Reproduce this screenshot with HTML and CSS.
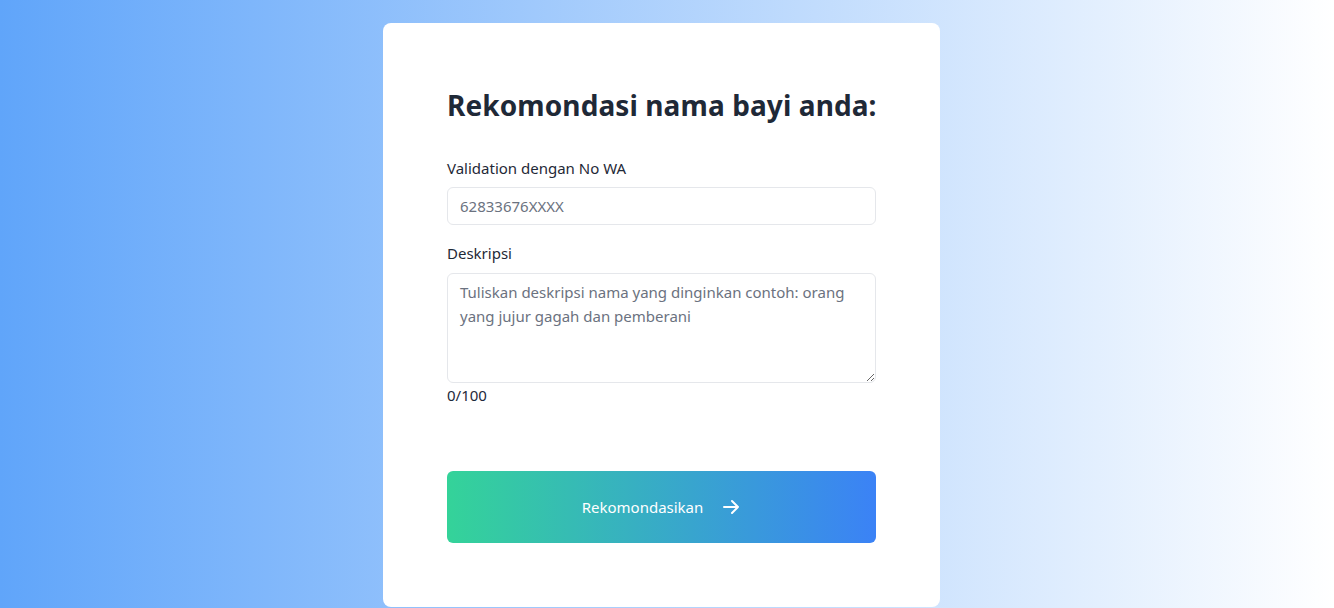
FILE: index.html
```html
<!DOCTYPE html>
<html lang="id">
<head>
<meta charset="utf-8">
<title>Rekomondasi nama bayi</title>
<link rel="stylesheet" href="styles.css">
</head>
<body>
<main class="page">
  <section class="card">
    <h1 class="title">Rekomondasi nama bayi anda:</h1>
    <form class="form">
      <label class="label" for="wa">Validation dengan No WA</label>
      <input class="input" id="wa" type="text" placeholder="62833676XXXX">
      <label class="label label-gap" for="desc">Deskripsi</label>
      <textarea class="textarea" id="desc" placeholder="Tuliskan deskripsi nama yang dinginkan contoh: orang yang jujur gagah dan pemberani"></textarea>
      <div class="count">0/100</div>
      <button class="btn" type="button">
        <span>Rekomondasikan</span>
        <svg class="arrow" width="20" height="20" viewBox="0 0 20 20" fill="none" stroke="currentColor" stroke-width="2" stroke-linecap="round" stroke-linejoin="round"><path d="M3 10h14M11 4l6 6-6 6"/></svg>
      </button>
    </form>
  </section>
</main>
</body>
</html>
```
FILE: styles.css
```css
* { box-sizing: border-box; }
html, body { margin: 0; padding: 0; height: 100%; }
body {
  font-family: "Noto Sans", "Open Sans", sans-serif;
  background: linear-gradient(to right, #60a5fa, #ffffff);
  overflow: hidden;
}
.page {
  height: 608px;
  display: flex;
  justify-content: center;
  padding-top: 23px;
}
.card {
  width: 557px;
  height: 584px;
  margin-left: -11px;
  background: #fff;
  border-radius: 8px;
  padding: 64px;
}
.title {
  margin: 0 0 33px;
  font-size: 28px;
  letter-spacing: 0.1px;
  white-space: nowrap;
  line-height: 36px;
  font-weight: 700;
  color: #1f2937;
}
.form { display: flex; flex-direction: column; }
.label {
  font-size: 15px;
  line-height: 24px;
  color: #1f2937;
  margin-bottom: 7px;
}
.label-gap { margin-top: 16px; margin-bottom: 8px; }
.input, .textarea {
  font-family: inherit;
  font-size: 15px;
  color: #374151;
  border: 1px solid #e5e7eb;
  border-radius: 6px;
  padding: 6px 12px;
  background: #fff;
  width: 100%;
}
.input { height: 38px; }
.textarea { height: 110px; line-height: 24px; resize: vertical; }
.input::placeholder, .textarea::placeholder { color: #6b7280; opacity: 1; }
.count {
  font-size: 15px;
  line-height: 24px;
  color: #1e293b;
}
.btn {
  margin-top: 64px;
  height: 72px;
  border: 0;
  border-radius: 6px;
  background: linear-gradient(to right, #34d399, #3b82f6);
  color: #fff;
  font-family: inherit;
  font-size: 15px;
  display: flex;
  align-items: center;
  justify-content: center;
  gap: 18px;
}
.arrow { display: block; }
```
